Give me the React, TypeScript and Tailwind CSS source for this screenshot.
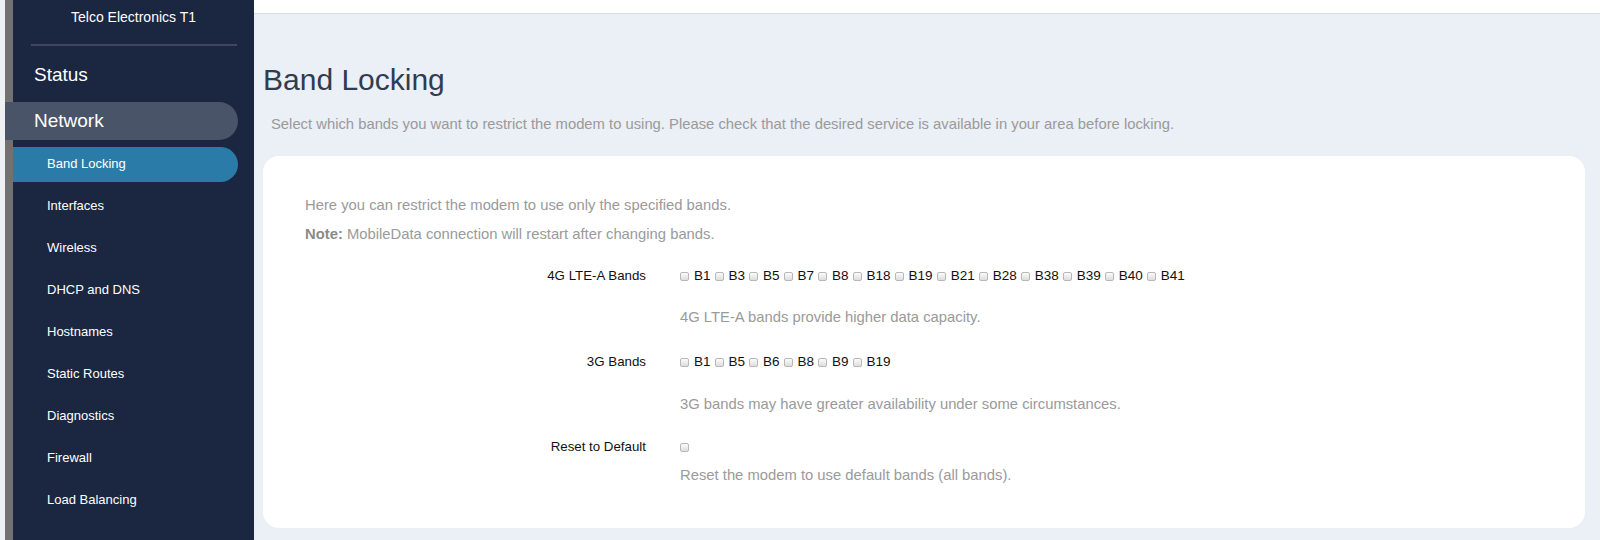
import React from 'react';

const subItems = [
  'Band Locking',
  'Interfaces',
  'Wireless',
  'DHCP and DNS',
  'Hostnames',
  'Static Routes',
  'Diagnostics',
  'Firewall',
  'Load Balancing',
];

const lteBands = ['B1', 'B3', 'B5', 'B7', 'B8', 'B18', 'B19', 'B21', 'B28', 'B38', 'B39', 'B40', 'B41'];
const umtsBands = ['B1', 'B5', 'B6', 'B8', 'B9', 'B19'];

function Box() {
  return (
    <span className="inline-block w-[9px] h-[9px] shrink-0 rounded-[2px] border border-[#b8b8b8] bg-gradient-to-b from-[#fbfbfb] to-[#dedede]" />
  );
}

function BandList({ bands }: { bands: string[] }) {
  return (
    <div className="flex items-center h-[20px] gap-[4px] text-[13.5px] text-[#111]">
      {bands.map((b) => (
        <span key={b} className="flex items-center gap-[5px]">
          <Box />
          <span>{b}</span>
        </span>
      ))}
    </div>
  );
}

function Sidebar() {
  return (
    <div className="flex shrink-0 h-[540px]">
      <div className="w-[5px] bg-[#eef0f4]" />
      <aside className="w-[249px] bg-[#1b2641] border-l-[8px] border-[#717171] text-white flex flex-col">
        <div className="pt-[7px] h-[27px] leading-[20px] text-[14px] text-center">Telco Electronics T1</div>
        <div className="mt-[17px] ml-[18px] w-[206px] h-[2px] bg-[#3d4860]" />
        <div className="mt-[16px] h-[26px] leading-[26px] text-[19px] pl-[21px]">Status</div>
        <div className="mt-[14px] -ml-[8px] w-[233px] h-[38px] rounded-r-full bg-[#4a5468] text-[19px] leading-[38px] pl-[29px]">
          Network
        </div>
        <div className="mt-[3px] flex flex-col">
          {subItems.map((item, i) => (
            <div key={item} className="h-[42px] py-[3.5px]">
              <div
                className={
                  i === 0
                    ? 'w-[225px] h-full rounded-r-full bg-[#2b7ba8] text-[13px] flex items-center pl-[34px]'
                    : 'h-full text-[13px] flex items-center pl-[34px]'
                }
              >
                {item}
              </div>
            </div>
          ))}
        </div>
      </aside>
    </div>
  );
}

export default function App() {
  return (
    <div className="w-[1600px] h-[540px] overflow-hidden flex bg-[#ebeff6] font-['Liberation_Sans',Arial,sans-serif]">
      <Sidebar />
      <main className="flex-1 flex flex-col">
        <div className="h-[14px] bg-white border-b border-[#dcdcdc]" />
        <div className="pl-[9px] pr-[15px]">
          <h1 className="mt-[49px] text-[30px] leading-[34px] text-[#303c50]">Band Locking</h1>
          <p className="mt-[17px] pl-[8px] text-[14.8px] leading-[20px] text-[#9a9a9a]">
            Select which bands you want to restrict the modem to using. Please check that the desired service is available in your area before locking.
          </p>
          <section className="mt-[22px] h-[372px] bg-white rounded-[16px] pt-[35px] pl-[42px]">
            <p className="text-[14.8px] leading-[29px] text-[#9a9a9a]">
              Here you can restrict the modem to use only the specified bands.
            </p>
            <p className="text-[14.8px] leading-[29px] text-[#9a9a9a]">
              <span className="font-bold text-[#8a8a8a]">Note:</span> MobileData connection will restart after changing bands.
            </p>

            <div className="mt-[17px] grid grid-cols-[341px_1fr] gap-x-[34px]">
              <div className="h-[20px] leading-[20px] text-right text-[13.3px] text-[#111]">4G LTE-A Bands</div>
              <div>
                <BandList bands={lteBands} />
                <div className="mt-[21px] h-[20px] leading-[20px] text-[14.8px] text-[#9a9a9a]">
                  4G LTE-A bands provide higher data capacity.
                </div>
              </div>

              <div className="mt-[25px] h-[20px] leading-[20px] text-right text-[13.3px] text-[#111]">3G Bands</div>
              <div className="mt-[25px]">
                <BandList bands={umtsBands} />
                <div className="mt-[22px] h-[20px] leading-[20px] text-[14.8px] text-[#9a9a9a]">
                  3G bands may have greater availability under some circumstances.
                </div>
              </div>

              <div className="mt-[23px] h-[20px] leading-[20px] text-right text-[13.3px] text-[#111]">Reset to Default</div>
              <div className="mt-[23px]">
                <div className="flex items-center h-[20px]">
                  <Box />
                </div>
                <div className="mt-[8px] h-[20px] leading-[20px] text-[14.8px] text-[#9a9a9a]">
                  Reset the modem to use default bands (all bands).
                </div>
              </div>
            </div>
          </section>
        </div>
      </main>
    </div>
  );
}
